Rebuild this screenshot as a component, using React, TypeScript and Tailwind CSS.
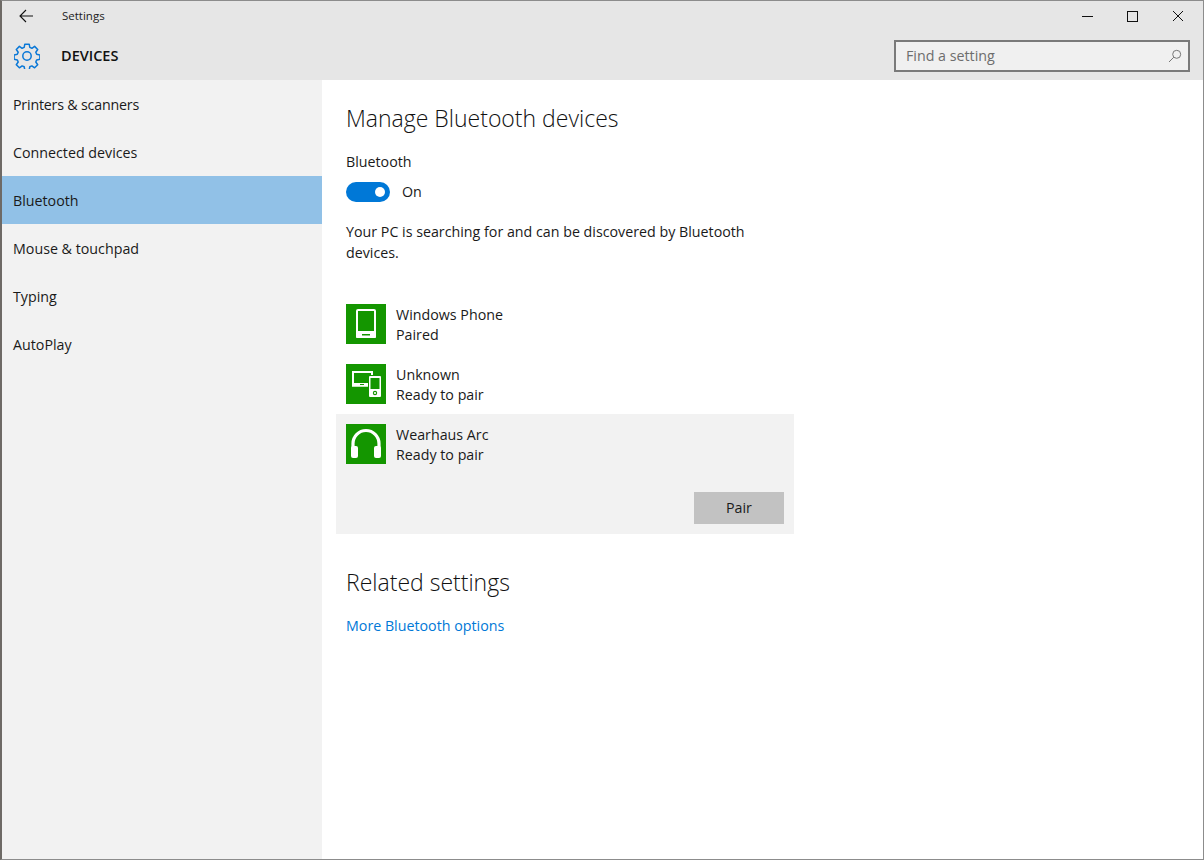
function DeviceTile({ children }: { children: React.ReactNode }) {
  return (
    <div className="w-10 h-10 bg-[#149600] shrink-0">
      <svg width="40" height="40" viewBox="0 0 40 40">{children}</svg>
    </div>
  );
}
function Device({ name, status, icon }: { name: string; status: string; icon: React.ReactNode }) {
  return (
    <div className="flex gap-2.5 h-10">
      <DeviceTile>{icon}</DeviceTile>
      <div className="flex flex-col pt-px text-[14.25px] leading-5 text-[#1a1a1a]">
        <div>{name}</div>
        <div>{status}</div>
      </div>
    </div>
  );
}
const nav = ["Printers & scanners", "Connected devices", "Bluetooth", "Mouse & touchpad", "Typing", "AutoPlay"];
export default function App() {
  return (
    <div className="w-[1204px] h-[860px] flex flex-col bg-white border border-[#8c8c8c] border-l-2 border-l-[#6e6a66] border-t-[#8c8c8c] font-['Open_Sans',sans-serif] overflow-hidden text-[#1a1a1a]">
      <header className="h-[79px] bg-[#e6e6e6] flex flex-col shrink-0">
        <div className="h-[30px] flex items-center relative">
          <svg width="16" height="14" viewBox="0 0 16 14" className="ml-[17px]" fill="none" stroke="#111" strokeWidth="1.1">
            <path d="M1 7h13M7 1 1 7l6 6" />
          </svg>
          <span className="ml-[27px] text-[11.5px] text-[#222]">Settings</span>
          <div className="ml-auto flex items-center gap-[34px] mr-[19px]">
            <div className="w-[11px] h-px bg-[#111]" />
            <div className="w-[11px] h-[11px] border border-[#111]" />
            <svg width="12" height="12" viewBox="0 0 12 12" stroke="#111" strokeWidth="1"><path d="M1 1l10 10M11 1 1 11" /></svg>
          </div>
        </div>
        <div className="flex-1 flex items-center">
          <svg width="26" height="26" viewBox="0 0 26 26" className="ml-[12px]" fill="none" stroke="#0a78d7" strokeWidth="1.5" strokeLinejoin="round">
            <path d="M10.8 1.2h4.4l.6 3.2 2.1.9 2.7-1.9 3.1 3.1-1.9 2.7.9 2.1 3.2.6v4.4l-3.2.6-.9 2.1 1.9 2.7-3.1 3.1-2.7-1.9-2.1.9-.6 3.2h-4.4l-.6-3.2-2.1-.9-2.7 1.9-3.1-3.1 1.9-2.7-.9-2.1-3.2-.6v-4.4l3.2-.6.9-2.1-1.9-2.7 3.1-3.1 2.7 1.9 2.1-.9z" />
            <circle cx="13" cy="13" r="4.2" />
          </svg>
          <span className="ml-[21px] text-[14.5px] font-semibold text-[#111]">DEVICES</span>
          <div className="ml-auto mr-[13px] w-[296px] h-[32px] bg-[#f0f0f0] border-2 border-[#7a7a7a] flex items-center pl-[10px] pr-[6px] text-[14.25px] text-[#6d6d6d]">
            <span>Find a setting</span>
            <svg width="14" height="14" viewBox="0 0 14 14" className="ml-auto" fill="none" stroke="#777" strokeWidth="1">
              <circle cx="8.7" cy="5.3" r="4" /><path d="M5.8 8.2 1 13" />
            </svg>
          </div>
        </div>
      </header>
      <div className="flex-1 flex min-h-0">
        <nav className="w-[320px] bg-[#f2f2f2] shrink-0 text-[14.25px]">
          {nav.map((n, i) => (
            <div key={n} className={"h-12 flex items-center pl-[11px] pt-0.5 " + (n === "Bluetooth" ? "bg-[#91c1e7] " : "") + (i === 0 ? "tracking-[-0.2px]" : "")}>{n}</div>
          ))}
        </nav>
        <main className="flex-1 pl-[24px]">
          <h1 className="text-[23px] font-light leading-[30px] mt-[23px] text-[#111]">Manage Bluetooth devices</h1>
          <div className="text-[14.25px] leading-5 mt-[19px]">Bluetooth</div>
          <div className="flex items-center mt-[10px] gap-3 h-5">
            <div className="w-11 h-5 rounded-full bg-[#0078d7] flex items-center justify-end pr-[5px]">
              <div className="w-[10px] h-[10px] rounded-full bg-white" />
            </div>
            <span className="text-[14.25px]">On</span>
          </div>
          <p className="w-[420px] text-[14.25px] leading-[21px] mt-[19px]">Your PC is searching for and can be discovered by Bluetooth devices.</p>
          <div className="mt-[41px] flex flex-col">
            <Device name="Windows Phone" status="Paired" icon={<>
              <rect x="11" y="6" width="18" height="27" rx="1" fill="none" stroke="#fff" strokeWidth="2" />
              <rect x="10" y="27" width="20" height="7" rx="1" fill="#fff" />
              <rect x="16" y="30" width="8" height="1.5" fill="#149600" />
            </>} />
            <div className="mt-5">
              <Device name="Unknown" status="Ready to pair" icon={<>
                <rect x="7" y="8" width="19" height="13.5" fill="none" stroke="#fff" strokeWidth="2" />
                <rect x="6" y="19" width="21" height="3.5" fill="#fff" />
                <rect x="14" y="20" width="4" height="1" fill="#149600" />
                <rect x="22" y="11" width="14" height="23" fill="#149600" />
                <rect x="23" y="12" width="12" height="21" rx="1" fill="#fff" />
                <rect x="24.5" y="14" width="9" height="11" fill="#149600" />
                <circle cx="29" cy="29" r="2.2" fill="#149600" />
                <circle cx="29" cy="29" r="1.1" fill="#fff" />
              </>} />
            </div>
            <div className="mt-[10px] w-[458px] -ml-[10px] h-[120px] bg-[#f2f2f2] px-[10px] pt-[10px] flex flex-col">
              <Device name="Wearhaus Arc" status="Ready to pair" icon={<>
                <path d="M7 24v-4.500a13 13 0 0 1 26 0v4.500" fill="none" stroke="#fff" strokeWidth="3.2" />
                <rect x="5" y="22" width="7" height="12" rx="2" fill="#fff" />
                <rect x="28" y="22" width="7" height="12" rx="2" fill="#fff" />
              </>} />
              <div className="mt-[28px] self-end w-[90px] h-8 bg-[#c2c2c2] flex items-center justify-center text-[14.25px]">Pair</div>
            </div>
          </div>
          <h2 className="text-[23px] font-light leading-[30px] mt-[33px] text-[#111]">Related settings</h2>
          <a className="block text-[14.25px] leading-5 mt-[19px] text-[#0078d7]">More Bluetooth options</a>
        </main>
      </div>
    </div>
  );
}
